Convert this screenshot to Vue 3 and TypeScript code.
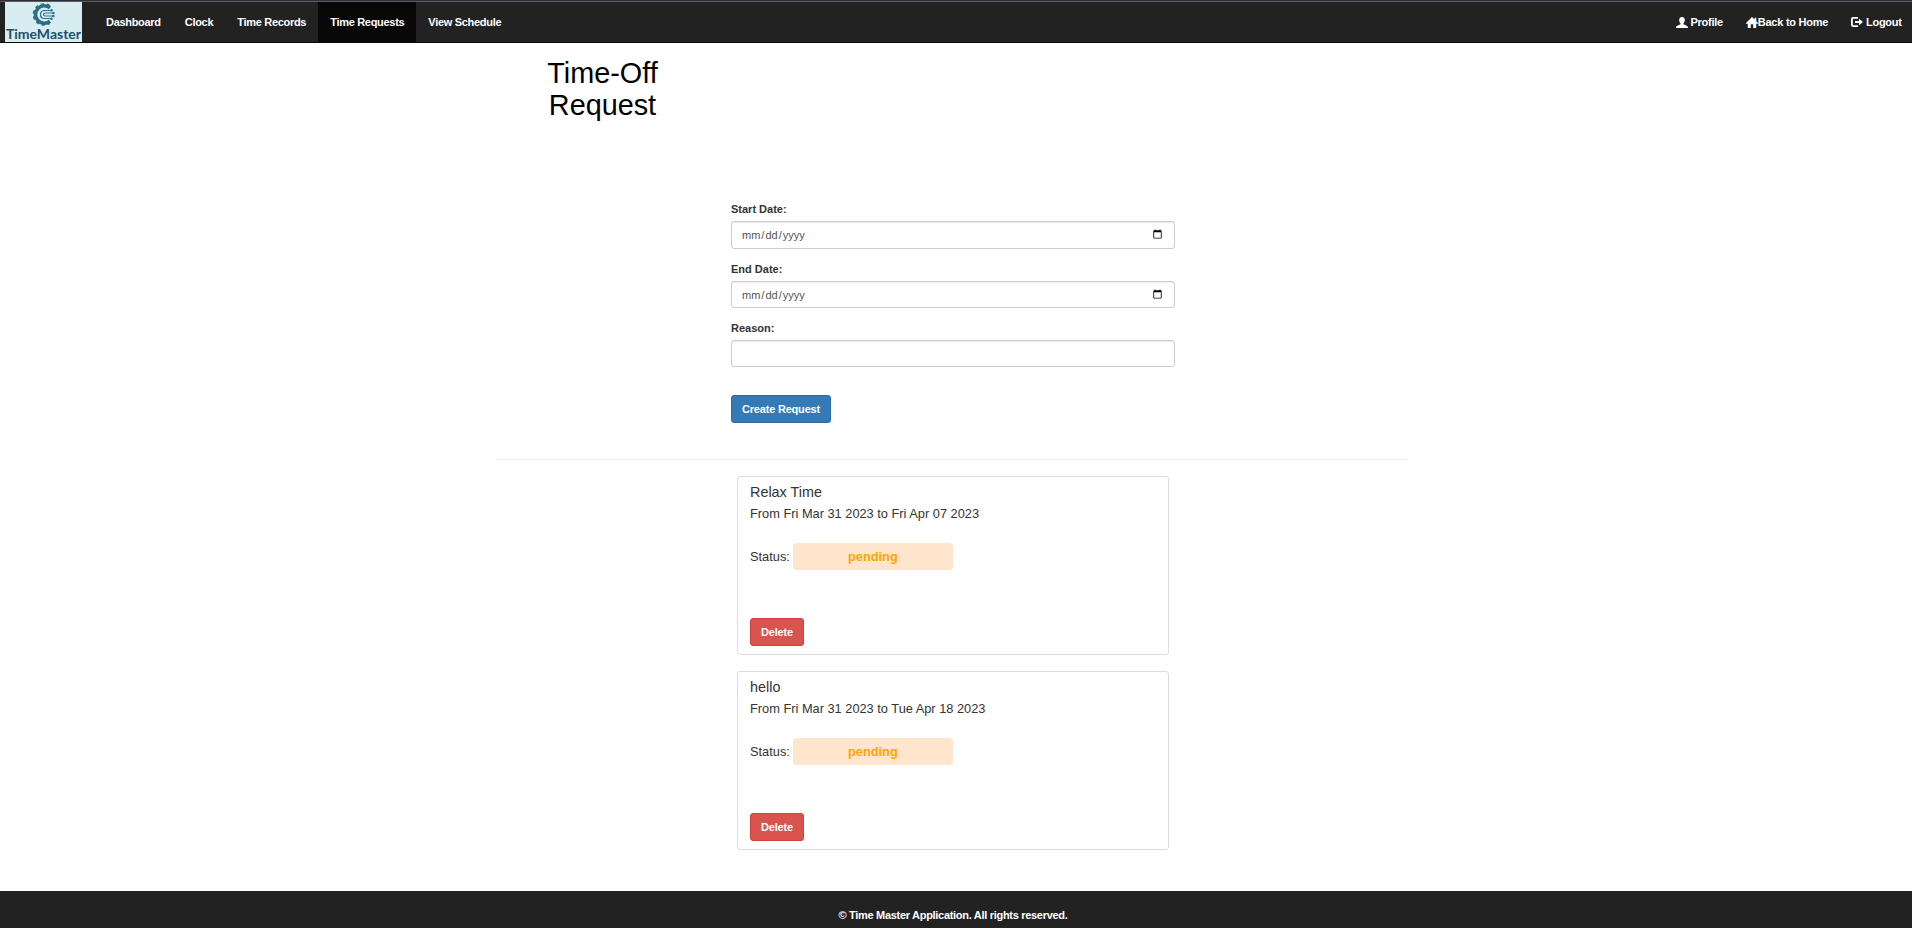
<script setup lang="ts">
import { ref } from 'vue'

interface TimeOffRequest {
  id: number
  reason: string
  start: string
  end: string
  status: string
}

const links = ['Dashboard', 'Clock', 'Time Records', 'Time Requests', 'View Schedule']
const active = ref('Time Requests')
const startDate = ref('')
const endDate = ref('')
const reason = ref('')

const requests = ref<TimeOffRequest[]>([
  { id: 1, reason: 'Relax Time', start: 'Fri Mar 31 2023', end: 'Fri Apr 07 2023', status: 'pending' },
  { id: 2, reason: 'hello', start: 'Fri Mar 31 2023', end: 'Tue Apr 18 2023', status: 'pending' },
])

function createRequest() {
  if (!reason.value || !startDate.value || !endDate.value) return
  requests.value.push({
    id: Date.now(),
    reason: reason.value,
    start: new Date(startDate.value).toDateString(),
    end: new Date(endDate.value).toDateString(),
    status: 'pending',
  })
}

function removeRequest(id: number) {
  requests.value = requests.value.filter((r) => r.id !== id)
}
</script>

<template>
  <div class="page">
    <nav class="navbar">
      <a class="brand" href="#">
        <svg class="gear" width="24" height="23" viewBox="0 0 24 23">
          <g fill="none" stroke="#2a6f86">
            <path d="M19 4.800A8.800 8.800 0 1 0 19 18.200" stroke-width="3.600" />
            <path d="M18.500 3.200A10 10 0 1 0 18.500 19.800" stroke-width="2.600" stroke-dasharray="3.200 2.600" />
            <path d="M20 7.500h-6.500Q9.500 7.500 9.500 11.500t4 4H20M22 10h-7.500q-2 0-2 1.500t2 1.500H22" stroke-width="1.200" />
          </g>
          <g fill="#2a6f86">
            <circle cx="20.500" cy="7.300" r="1.200" />
            <circle cx="22.400" cy="10" r="1.200" />
            <circle cx="22.400" cy="13" r="1.200" />
            <circle cx="20.500" cy="15.700" r="1.200" />
          </g>
        </svg>
        <span class="brand-name">TimeMaster</span>
      </a>
      <ul class="menu">
        <li v-for="link in links" :key="link">
          <a href="#" :class="{ active: link === active }" @click.prevent="active = link">{{ link }}</a>
        </li>
      </ul>
      <ul class="menu right">
        <li>
          <a href="#">
            <svg class="user" width="12" height="11" viewBox="0 0 12 11">
              <path d="M6 0C4.200 0 3.200 1.200 3.200 3c0 1.300.5 2.600 1.300 3.300v.9C3.800 8.100 0 8.300 0 10.500V11h12v-.5C12 8.300 8.200 8.100 7.500 7.200v-.9C8.300 5.600 8.800 4.300 8.800 3 8.800 1.200 7.800 0 6 0z" fill="#fff" />
            </svg>
            Profile
          </a>
        </li>
        <li>
          <a href="#"><svg class="home" width="12" height="11" viewBox="0 0 12 11">
            <path d="M6 0 0 6v.7h1.800V11h3V7.200h2.400V11h3V6.700H12V6L10.300 4.300V.8H8.600v1.800z" fill="#fff" />
          </svg>Back to Home</a>
        </li>
        <li>
          <a href="#">
            <svg class="exit" width="12" height="10" viewBox="0 0 12 10">
              <path d="M7 .9H2.200Q.9.900.9 2.200v5.600Q.9 9.100 2.200 9.100H7" fill="none" stroke="#fff" stroke-width="1.800" />
              <path d="M4 4.100h4V1.700L12 5 8 8.300V5.900H4z" fill="#fff" />
            </svg>
            Logout
          </a>
        </li>
      </ul>
    </nav>

    <main class="container">
      <h1>Time-Off Request</h1>
      <form class="request-form" @submit.prevent="createRequest">
        <label for="start">Start Date:</label>
        <input id="start" v-model="startDate" class="start" type="date" />
        <label for="end">End Date:</label>
        <input id="end" v-model="endDate" class="end" type="date" />
        <label for="reason">Reason:</label>
        <input id="reason" v-model="reason" type="text" />
        <button class="btn primary" type="submit">Create Request</button>
      </form>
      <hr />
      <section class="cards">
        <article v-for="r in requests" :key="r.id" class="card">
          <h4>{{ r.reason }}</h4>
          <p class="dates">From {{ r.start }} to {{ r.end }}</p>
          <div class="status">
            <span>Status:</span>
            <span class="pill">{{ r.status }}</span>
          </div>
          <button class="btn danger" @click="removeRequest(r.id)">Delete</button>
        </article>
      </section>
    </main>

    <footer>© Time Master Application. All rights reserved.</footer>
  </div>
</template>

<style>
body {
  margin: 0;
  background: #fff;
}
</style>

<style scoped>
* {
  box-sizing: border-box;
}
.page {
  display: flex;
  flex-direction: column;
  height: 928px;
  overflow: hidden;
  font-family: 'Liberation Sans', Arial, sans-serif;
  font-size: 11px;
  color: #333;
}
.navbar {
  display: flex;
  flex: none;
  height: 43px;
  padding-left: 5px;
  background: #222;
  border-top: 1px solid #302f35;
  border-bottom: 1px solid #080808;
  box-shadow: inset 0 1px #5b5a62;
}
.brand {
  display: flex;
  flex-direction: column;
  align-items: center;
  width: 77px;
  height: 40px;
  margin: 1px 12px 0 0;
  background: #d8edf2;
  text-decoration: none;
}
.gear {
  flex: none;
  margin: 1px 2px 0 0;
}
.brand-name {
  font: 700 14px/15px Lato, sans-serif;
  color: #21506b;
  white-space: nowrap;
}
.menu {
  display: flex;
  margin: 1px 0 0;
  padding: 0;
  list-style: none;
}
.menu.right {
  margin-left: auto;
  margin-right: -1px;
}
.menu a {
  display: flex;
  align-items: center;
  height: 40px;
  padding: 0 12px;
  font-weight: 700;
  letter-spacing: -0.3px;
  color: #fff;
  text-decoration: none;
  white-space: nowrap;
}
.menu.right a {
  padding: 0 11.300px 0 12px;
  letter-spacing: -0.25px;
}
.menu a.active {
  background: #080808;
}
.user,
.exit {
  margin-right: 3px;
}
.exit {
  margin-right: 2.500px;
}
.home {
  margin-right: -0.5px;
}
.container {
  width: 918px;
  margin: 0 auto;
  padding-right: 6px;
  flex: 1;
}
h1 {
  width: 150px;
  margin: 14px 0 0 30.500px;
  font-size: 28.8px;
  font-weight: 400;
  line-height: 32px;
  text-align: center;
  color: #000;
}
.request-form {
  display: flex;
  flex-direction: column;
  width: 444px;
  margin: 80px auto 0;
}
label {
  height: 16px;
  margin-bottom: 4px;
  line-height: 16px;
  font-weight: 700;
}
input {
  height: 27px;
  margin: 0 0 12px;
  padding: 5px 9px;
  border: 1px solid #ccc;
  border-radius: 3px;
  box-shadow: inset 0 1px 1px rgba(0, 0, 0, 0.075);
  background: #fff;
  font: 11px 'Liberation Sans', Arial, sans-serif;
  color: #555;
}
input.start {
  height: 28px;
  padding-bottom: 6px;
}
.btn {
  align-self: flex-start;
  height: 28px;
  padding: 0;
  border: 1px solid;
  border-radius: 3px;
  font: 700 11px 'Liberation Sans', Arial, sans-serif;
  letter-spacing: -0.2px;
  white-space: nowrap;
  color: #fff;
}
.primary {
  width: 100px;
  margin-top: 16px;
  background: #337ab7;
  border-color: #2e6da4;
}
.danger {
  width: 54px;
  background: #d9534f;
  border-color: #d43f3a;
}
hr {
  height: 1px;
  margin: 36px 0 16px;
  border: 0;
  background: #eee;
}
.cards {
  display: flex;
  flex-direction: column;
  align-items: center;
  gap: 16px;
}
.card {
  width: 432px;
  height: 179px;
  padding: 6px 12px;
  border: 1px solid #ddd;
  border-radius: 3px;
}
h4 {
  margin: 0;
  font-size: 14.4px;
  font-weight: 400;
  line-height: 19px;
}
.dates {
  margin: 1px 0 19px;
  font-size: 12.8px;
  line-height: 21px;
}
.status {
  display: flex;
  align-items: center;
  height: 27px;
  margin-bottom: 48px;
  font-size: 12.8px;
}
.pill {
  width: 160px;
  margin-left: 3px;
  border-radius: 4px;
  background: #ffe5cc;
  color: #ffa500;
  font-weight: 700;
  line-height: 27px;
  text-align: center;
}
footer {
  flex: none;
  height: 37px;
  padding: 16px 6px 0 0;
  background: #222;
  color: #fff;
  font-weight: 700;
  letter-spacing: -0.3px;
  line-height: 16px;
  text-align: center;
}
</style>
